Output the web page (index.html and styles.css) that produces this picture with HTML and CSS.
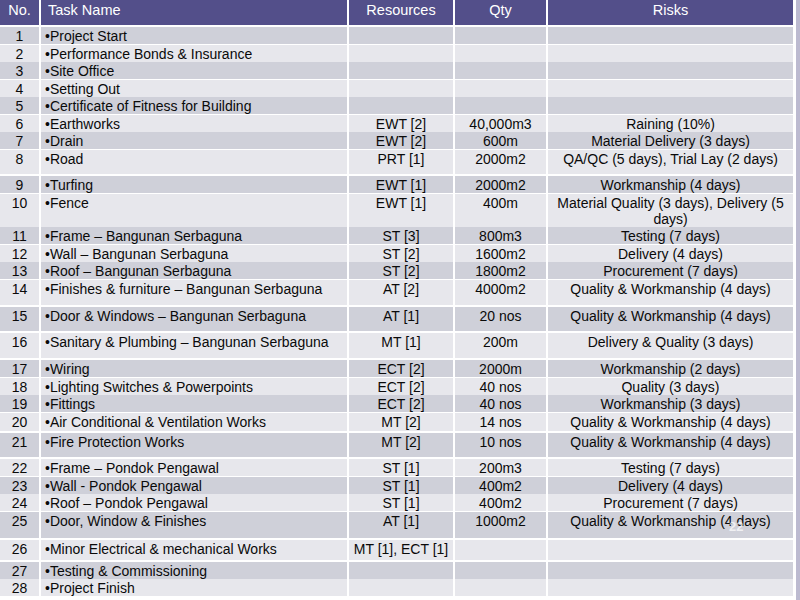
FILE: index.html
```html
<!DOCTYPE html>
<html>
<head>
<meta charset="utf-8">
<link rel="stylesheet" href="styles.css">
</head>
<body>
<div class="slide">
  <div class="sheet">
    <div class="row head">
      <div class="c no">No.</div><div class="c task">Task Name</div><div class="c mid">Resources</div><div class="c mid">Qty</div><div class="c mid">Risks</div>
    </div>
    <div class="row odd"><div class="c no">1</div><div class="c task">•Project Start</div><div class="c mid"></div><div class="c mid"></div><div class="c mid"></div></div>
    <div class="row even"><div class="c no">2</div><div class="c task">•Performance Bonds &amp; Insurance</div><div class="c mid"></div><div class="c mid"></div><div class="c mid"></div></div>
    <div class="row odd"><div class="c no">3</div><div class="c task">•Site Office</div><div class="c mid"></div><div class="c mid"></div><div class="c mid"></div></div>
    <div class="row even"><div class="c no">4</div><div class="c task">•Setting Out</div><div class="c mid"></div><div class="c mid"></div><div class="c mid"></div></div>
    <div class="row odd"><div class="c no">5</div><div class="c task">•Certificate of Fitness for Building</div><div class="c mid"></div><div class="c mid"></div><div class="c mid"></div></div>
    <div class="row even"><div class="c no">6</div><div class="c task">•Earthworks</div><div class="c mid">EWT [2]</div><div class="c mid">40,000m3</div><div class="c mid">Raining (10%)</div></div>
    <div class="row odd"><div class="c no">7</div><div class="c task">•Drain</div><div class="c mid">EWT [2]</div><div class="c mid">600m</div><div class="c mid">Material Delivery (3 days)</div></div>
    <div class="row even h24"><div class="c no">8</div><div class="c task">•Road</div><div class="c mid">PRT [1]</div><div class="c mid">2000m2</div><div class="c mid">QA/QC (5 days), Trial Lay (2 days)</div></div>
    <div class="row odd h16"><div class="c no">9</div><div class="c task">•Turfing</div><div class="c mid">EWT [1]</div><div class="c mid">2000m2</div><div class="c mid">Workmanship (4 days)</div></div>
    <div class="row even h31"><div class="c no">10</div><div class="c task">•Fence</div><div class="c mid">EWT [1]</div><div class="c mid">400m</div><div class="c mid">Material Quality (3 days), Delivery (5<br>days)</div></div>
    <div class="row odd"><div class="c no">11</div><div class="c task">•Frame – Bangunan Serbaguna</div><div class="c mid">ST [3]</div><div class="c mid">800m3</div><div class="c mid">Testing (7 days)</div></div>
    <div class="row even"><div class="c no">12</div><div class="c task">•Wall – Bangunan Serbaguna</div><div class="c mid">ST [2]</div><div class="c mid">1600m2</div><div class="c mid">Delivery (4 days)</div></div>
    <div class="row odd"><div class="c no">13</div><div class="c task">•Roof – Bangunan Serbaguna</div><div class="c mid">ST [2]</div><div class="c mid">1800m2</div><div class="c mid">Procurement (7 days)</div></div>
    <div class="row even h25"><div class="c no">14</div><div class="c task">•Finishes &amp; furniture – Bangunan Serbaguna</div><div class="c mid">AT [2]</div><div class="c mid">4000m2</div><div class="c mid">Quality &amp; Workmanship (4 days)</div></div>
    <div class="row odd h24"><div class="c no">15</div><div class="c task">•Door &amp; Windows – Bangunan Serbaguna</div><div class="c mid">AT [1]</div><div class="c mid">20 nos</div><div class="c mid">Quality &amp; Workmanship (4 days)</div></div>
    <div class="row even h25b"><div class="c no">16</div><div class="c task">•Sanitary &amp; Plumbing – Bangunan Serbaguna</div><div class="c mid">MT [1]</div><div class="c mid">200m</div><div class="c mid">Delivery &amp; Quality (3 days)</div></div>
    <div class="row odd"><div class="c no">17</div><div class="c task">•Wiring</div><div class="c mid">ECT [2]</div><div class="c mid">2000m</div><div class="c mid">Workmanship (2 days)</div></div>
    <div class="row even"><div class="c no">18</div><div class="c task">•Lighting Switches &amp; Powerpoints</div><div class="c mid">ECT [2]</div><div class="c mid">40 nos</div><div class="c mid">Quality (3 days)</div></div>
    <div class="row odd"><div class="c no">19</div><div class="c task">•Fittings</div><div class="c mid">ECT [2]</div><div class="c mid">40 nos</div><div class="c mid">Workmanship (3 days)</div></div>
    <div class="row even h18"><div class="c no">20</div><div class="c task">•Air Conditional &amp; Ventilation Works</div><div class="c mid">MT [2]</div><div class="c mid">14 nos</div><div class="c mid">Quality &amp; Workmanship (4 days)</div></div>
    <div class="row odd h24"><div class="c no">21</div><div class="c task">•Fire Protection Works</div><div class="c mid">MT [2]</div><div class="c mid">10 nos</div><div class="c mid">Quality &amp; Workmanship (4 days)</div></div>
    <div class="row even"><div class="c no">22</div><div class="c task">•Frame – Pondok Pengawal</div><div class="c mid">ST [1]</div><div class="c mid">200m3</div><div class="c mid">Testing (7 days)</div></div>
    <div class="row odd"><div class="c no">23</div><div class="c task">•Wall - Pondok Pengawal</div><div class="c mid">ST [1]</div><div class="c mid">400m2</div><div class="c mid">Delivery (4 days)</div></div>
    <div class="row even"><div class="c no">24</div><div class="c task">•Roof – Pondok Pengawal</div><div class="c mid">ST [1]</div><div class="c mid">400m2</div><div class="c mid">Procurement (7 days)</div></div>
    <div class="row odd h26"><div class="c no">25</div><div class="c task">•Door, Window &amp; Finishes</div><div class="c mid">AT [1]</div><div class="c mid">1000m2</div><div class="c mid">Quality &amp; Workmanship (4 days)</div></div>
    <div class="row even h20"><div class="c no">26</div><div class="c task">•Minor Electrical &amp; mechanical Works</div><div class="c mid">MT [1], ECT [1]</div><div class="c mid"></div><div class="c mid"></div></div>
    <div class="row odd"><div class="c no">27</div><div class="c task">•Testing &amp; Commissioning</div><div class="c mid"></div><div class="c mid"></div><div class="c mid"></div></div>
    <div class="row even h12"><div class="c no">28</div><div class="c task">•Project Finish</div><div class="c mid"></div><div class="c mid"></div><div class="c mid"></div></div>
    <div class="slide-num">22</div>
  </div>
  <div class="edge"></div>
</div>
</body>
</html>
```

FILE: styles.css
```css
html, body {
  margin: 0;
  padding: 0;
  background: #ffffff;
}
body {
  font-family: "Liberation Sans", Arial, sans-serif;
  color: #0a0a0a;
}
.slide {
  width: 800px;
  height: 600px;
  display: flex;
  gap: 3px;
  overflow: hidden;
}
.sheet {
  position: relative;
  width: 793px;
  display: flex;
  flex-direction: column;
  row-gap: 2px;
}
.edge {
  width: 4px;
  background: #bcbad0;
}
.row {
  display: grid;
  grid-template-columns: 39px 306px 104px 91px 245px;
  column-gap: 2px;
  height: 15.5px;
  flex: none;
}
.row.odd .c { background: #cfd0d9; }
.row.even .c { background: #e7e7ec; }
.c {
  box-sizing: border-box;
  padding-top: 1px;
  font-size: 14px;
  line-height: 16px;
  white-space: nowrap;
  overflow: visible;
}
.no { text-align: center; }
.task { padding-left: 4px; }
.mid { text-align: center; }

.row.head { height: 25px; }
.row.head .c {
  background: #534f8a;
  color: #ffffff;
  padding-top: 0;
  font-size: 14.5px;
  line-height: 21px;
}
.row.head .task { padding-left: 7px; }

.h12 { height: 12px; }
.h16 { height: 16px; }
.h18 { height: 18.5px; }
.h20 { height: 20px; }
.h24 { height: 24px; }
.h25 { height: 25.5px; }
.h25b { height: 25px; }
.h26 { height: 26px; }
.h31 { height: 31.5px; }

.slide-num {
  position: absolute;
  left: 729px;
  top: 519px;
  font-size: 13px;
  font-weight: bold;
  color: rgba(255, 255, 255, 0.7);
}
```
